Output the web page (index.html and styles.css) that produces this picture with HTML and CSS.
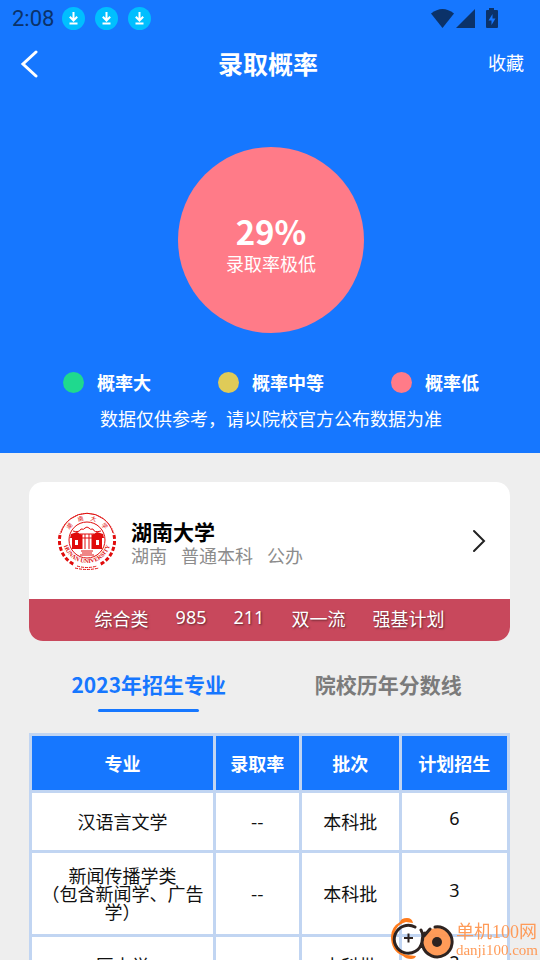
FILE: index.html
```html
<!DOCTYPE html>
<html lang="zh-CN">
<head>
    <meta charset="UTF-8">
    <meta name="viewport" content="width=device-width, initial-scale=1.0">
    <title>录取概率</title>
    <link rel="stylesheet" href="styles.css">
</head>
<body>
    <div class="app">
        <header class="hero">
            <div class="status-bar">
                <span class="time">2:08</span>
                <svg class="download" viewBox="0 0 23 23"><circle cx="11.5" cy="11.5" r="11.5"/><path d="M11.5 5v8M7.8 9.8l3.7 3.7 3.7-3.7M7.5 16.5h8"/></svg>
                <svg class="download" viewBox="0 0 23 23"><circle cx="11.5" cy="11.5" r="11.5"/><path d="M11.5 5v8M7.8 9.8l3.7 3.7 3.7-3.7M7.5 16.5h8"/></svg>
                <svg class="download" viewBox="0 0 23 23"><circle cx="11.5" cy="11.5" r="11.5"/><path d="M11.5 5v8M7.8 9.8l3.7 3.7 3.7-3.7M7.5 16.5h8"/></svg>
                <svg class="signals" viewBox="0 0 68 20">
                    <path d="M0 5.5Q11.500-3.500 23 5.500L11.500 20z"/>
                    <path d="M25 20L44 1v19z"/>
                    <path fill-rule="evenodd" d="M58 0h5v2h3q1 0 1 1v16q0 1-1 1H56q-1 0-1-1V3q0-1 1-1h2zM61.500 6L57.500 12.500h3V17l4-6.500h-3z"/>
                </svg>
            </div>

            <nav class="nav-bar">
                <button class="back" aria-label="返回">
                    <svg viewBox="0 0 18 28"><path d="M16 2L3 14l13 12"/></svg>
                </button>
                <h1>录取概率</h1>
                <button class="favorite">收藏</button>
            </nav>

            <div class="rate">
                <strong>29%</strong>
                <span>录取率极低</span>
            </div>

            <ul class="legend">
                <li class="high">概率大</li>
                <li class="middle">概率中等</li>
                <li class="low">概率低</li>
            </ul>
            <p class="note">数据仅供参考，请以院校官方公布数据为准</p>
        </header>

        <main>
            <section class="card">
                <a class="school" href="#school">
                    <!-- Escudo de la universidad -->
                    <svg class="emblem" viewBox="0 0 58 58">
                        <defs>
                            <path id="ring-top" d="M8 29a21 21 0 0 1 42 0"/>
                            <path id="ring-bottom" d="M5 27a24 24 0 0 0 48 0"/>
                        </defs>
                        <path class="rope" d="M2 22A28 28 0 0 1 56 22"/>
                        <path d="M3 21A27 27 0 0 1 55 21"/>
                        <path class="leaves" d="M2 23A27 27 0 0 0 17 53M56 23A27 27 0 0 1 41 53"/>
                        <circle cx="29" cy="28" r="18"/>
                        <path d="M15 19q6 2 8-2 3 1 4-1 2-2 4 0 1 2 4 1 1 4 8 2M22 22h14l2 4H20zM24 22v15M27 22v15M31 22v15M34 22v15M23 39h12M24 41h10M22 43h14"/>
                        <path class="solid" fill-rule="evenodd" d="M13 22l6-2 5 3v14H14V26h-2zM17 28v5h3v-5zM45 22l-6-2-5 3v14h10V26h2zM38 28v5h3v-5z"/>
                        <text class="emblem-cn"><textPath href="#ring-top" startOffset="50%">湖　南　大　学</textPath></text>
                        <text class="emblem-en"><textPath href="#ring-bottom" startOffset="50%">HUNAN UNIVERSITY</textPath></text>
                        <path class="ribbon" d="M19 54q10 3 20 0M17 56q12 3 24 0"/>
                    </svg>
                    <div class="school-info">
                        <h2>湖南大学</h2>
                        <p><span>湖南</span><span>普通本科</span><span>公办</span></p>
                    </div>
                    <svg class="arrow" viewBox="0 0 14 24"><path d="M2 2l10 10L2 22"/></svg>
                </a>
                <div class="tags">
                    <span>综合类</span>
                    <span>985</span>
                    <span>211</span>
                    <span>双一流</span>
                    <span>强基计划</span>
                </div>
            </section>

            <div class="tabs">
                <button class="tab active">2023年招生专业</button>
                <button class="tab">院校历年分数线</button>
            </div>

            <table>
                <colgroup>
                    <col class="col-major">
                    <col class="col-rate">
                    <col class="col-batch">
                    <col class="col-plan">
                </colgroup>
                <thead>
                    <tr><th>专业</th><th>录取率</th><th>批次</th><th>计划招生</th></tr>
                </thead>
                <tbody>
                    <tr><td>汉语言文学</td><td>--</td><td>本科批</td><td class="num">6</td></tr>
                    <tr><td>新闻传播学类<br>（包含新闻学、广告学）</td><td>--</td><td>本科批</td><td class="num">3</td></tr>
                    <tr><td>历史学</td><td>--</td><td>本科批</td><td class="num">2</td></tr>
                </tbody>
            </table>
        </main>

        <div class="watermark">
            <svg viewBox="0 0 64 44">
                <path class="swoosh" d="M10 6q1-4 7-4 5 0 6 5l-7-1Q4 9 4 23q0 13 13 16l9 1q-1 3-5 3-5 0-8-3Q1 35 1 21 1 11 10 6z"/>
                <circle class="disc" cx="47" cy="26" r="14"/>
                <path class="line" d="M25 11A14 14 0 1 0 32 26Q34 19 31 14M34 20l6-7M45 11A15 15 0 1 1 35 17"/>
                <path class="plus" d="M14 22h9M18.500 17.500v9"/>
                <circle class="hub" cx="47" cy="26" r="5"/>
            </svg>
            <div class="mark-text">
                <p class="mark-name">单机100网</p>
                <p class="mark-url">danji100.com</p>
            </div>
        </div>
    </div>
</body>
</html>
```

FILE: styles.css
```css
:root {
    --blue: #1677ff;
    --line: #c1d5f2;
    --dark-blue: #0b3269;
    --low: #ff7b88;
    --crest: #e00c0c;
}

* {
    box-sizing: border-box;
    margin: 0;
    padding: 0;
}

body {
    background: #eee;
    font-family: "Noto Sans CJK SC", sans-serif;
    font-size: 18px;
    color: #111;
}

button {
    background: none;
    border: none;
    font: inherit;
    color: inherit;
    cursor: pointer;
}

svg {
    display: block;
    flex: none;
    fill: none;
}

.app {
    height: 100vh;
    overflow: hidden auto;
    scrollbar-width: none;
}

.hero {
    background: var(--blue);
    color: white;
    padding: 0 0 22px 2px;
}

/* Status bar */
.status-bar {
    display: flex;
    align-items: center;
    gap: 10px;
    height: 36px;
    padding: 0 41px 0 10px;
}

.time {
    width: 40px;
    font-family: Roboto, sans-serif;
    font-size: 22px;
    white-space: nowrap;
    color: var(--dark-blue);
}

.download {
    width: 23px;
    height: 23px;
}

.download circle {
    fill: #00bfff;
}

.download path {
    stroke: white;
    stroke-width: 2;
}

.signals {
    width: 68px;
    height: 20px;
    margin-left: auto;
    fill: var(--dark-blue);
}

/* Navigation */
.nav-bar {
    display: grid;
    grid-template-columns: 1fr auto 1fr;
    align-items: center;
    height: 56px;
    padding: 0 16px 0 10px;
}

.back {
    justify-self: start;
    padding-left: 8px;
}

.back svg {
    width: 18px;
    height: 28px;
    stroke: white;
    stroke-width: 3;
    stroke-linecap: round;
}

.nav-bar h1 {
    padding-bottom: 2px;
    font-size: 25px;
    line-height: 36px;
}

.favorite {
    justify-self: end;
    padding-bottom: 4px;
}

.rate {
    display: flex;
    flex-direction: column;
    align-items: center;
    justify-content: center;
    width: 186px;
    height: 186px;
    margin: 55px auto 0;
    padding-top: 6px;
    border-radius: 50%;
    background: var(--low);
}

.rate strong {
    font-size: 33px;
    line-height: 40px;
}

.rate span {
    line-height: 24px;
}

.legend {
    display: flex;
    justify-content: center;
    gap: 67px;
    margin-top: 36px;
    list-style: none;
    font-weight: 700;
}

.legend li {
    display: flex;
    align-items: center;
    gap: 13px;
    line-height: 26px;
}

.legend li::before {
    content: "";
    width: 21px;
    height: 21px;
    border-radius: 50%;
}

.high::before {
    background: #1fd98e;
}

.middle::before {
    background: #dfcb58;
}

.low::before {
    background: var(--low);
}

.note {
    margin-top: 10px;
    line-height: 26px;
    text-align: center;
}

main {
    padding: 29px 30px 20px 29px;
}

/* School card */
.card {
    border-radius: 14px;
    background: white;
    overflow: hidden;
}

.school {
    display: flex;
    align-items: center;
    gap: 15px;
    height: 117px;
    padding: 0 24px 0 29px;
    color: black;
    text-decoration: none;
}

.emblem {
    width: 58px;
    height: 58px;
    stroke: var(--crest);
    stroke-width: 1;
}

.emblem .rope {
    stroke-dasharray: 1 1;
}

.emblem .leaves {
    stroke-width: 3;
    stroke-dasharray: 4 2;
}

.emblem .solid,
.emblem text {
    fill: var(--crest);
    stroke: none;
}

.emblem text {
    text-anchor: middle;
}

.emblem-cn {
    font-size: 6px;
}

.emblem-en {
    font-family: "Liberation Serif", serif;
    font-size: 6px;
    font-weight: 700;
}

.emblem .ribbon {
    stroke-dasharray: 3 1;
}

.school-info {
    flex: 1;
    padding-top: 4px;
}

.school-info h2 {
    font-size: 21px;
    line-height: 24px;
}

.school-info p {
    display: flex;
    gap: 14px;
    line-height: 24px;
    color: #8c8c8c;
}

.arrow {
    width: 14px;
    height: 24px;
    stroke: #222;
    stroke-width: 2;
    stroke-linecap: round;
}

.tags {
    display: flex;
    justify-content: center;
    align-items: flex-start;
    gap: 27px;
    height: 42px;
    padding-top: 6px;
    background: #c8485c;
    color: white;
    font-family: "Noto Sans", "Noto Sans CJK SC", sans-serif;
    text-shadow: 1px 1px 2px rgba(0, 0, 0, 0.5);
}

/* Tabs */
.tabs {
    display: grid;
    grid-template-columns: 1fr 1fr;
    margin-top: 27px;
    padding-right: 2px;
}

.tab {
    display: flex;
    flex-direction: column;
    align-items: center;
    gap: 9px;
    font-size: 21px;
    font-weight: 700;
    line-height: 32px;
    color: #7b7b7b;
}

.tab::after {
    content: "";
    width: 101px;
    height: 3px;
    border-radius: 2px;
}

.tab.active {
    color: var(--blue);
}

.tab.active::after {
    background: var(--blue);
}

/* Majors table */
table {
    width: 100%;
    margin-top: 21px;
    table-layout: fixed;
    border-spacing: 3px;
    background: var(--line);
    text-align: center;
    line-height: 18px;
}

.col-major {
    width: 38.8%;
}

.col-rate {
    width: 17.8%;
}

.col-batch {
    width: 20.8%;
}

.col-plan {
    width: 22.6%;
}

th {
    height: 54px;
    background: var(--blue);
    color: white;
}

td {
    height: 57px;
    padding: 13px 9px 14px;
    background: white;
}

td.num {
    padding-bottom: 20px;
    font-family: "Noto Sans", sans-serif;
}

.watermark {
    position: fixed;
    right: 2px;
    bottom: 0;
    display: flex;
    align-items: center;
    gap: 2px;
    color: #ff9650;
    opacity: 0.95;
}

.watermark svg {
    width: 64px;
    height: 44px;
}

.swoosh {
    fill: #ff7410;
}

.disc {
    fill: #ff9650;
}

.watermark .line {
    stroke: #231815;
    stroke-width: 3;
    stroke-linecap: round;
}

.watermark .plus {
    stroke: #231815;
    stroke-width: 2;
}

.hub {
    fill: #231815;
}

.mark-text {
    padding-top: 4px;
}

.mark-name {
    font-family: "Liberation Serif", "Noto Sans CJK SC", serif;
    font-size: 18px;
    line-height: 20px;
}

.mark-url {
    font-family: "Liberation Serif", serif;
    font-size: 15px;
    line-height: 16px;
}
```
